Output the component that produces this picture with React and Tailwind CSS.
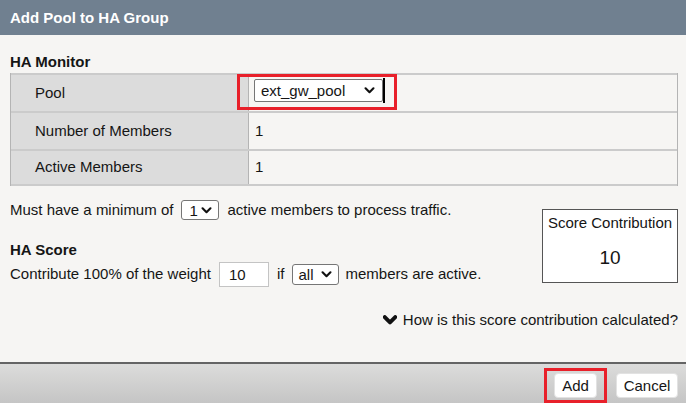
import React from 'react';

const Chevron = ({ className = 'w-[11px] h-[7px]', strokeWidth = 2.4 }) => (
  <svg viewBox="0 0 12 8" className={className} fill="none">
    <path d="M1.5 1.5 L6 6 L10.5 1.5" stroke="#111" strokeWidth={strokeWidth} strokeLinecap="round" strokeLinejoin="round" />
  </svg>
);

const MonitorRow = ({ label, children, last = false, overlay = null }) => (
  <div
    className={`relative flex border-t-2 border-[#cbcbcb] ${last ? 'border-b-2 h-[37px]' : 'h-[38px]'}`}
  >
    <div className="w-[238px] shrink-0 flex items-center pl-[24px] bg-[#dcdcdc] border-r border-[#b4b4b4]">
      {label}
    </div>
    <div className="flex-1 flex items-start pl-[5px]">{children}</div>
    {overlay}
  </div>
);

export default function App() {
  return (
    <div
      className="w-[686px] h-[403px] flex flex-col bg-[#f6f5f3] text-[15px] text-[#151515] overflow-hidden"
      style={{ fontFamily: '"Liberation Sans", Arial, sans-serif' }}
    >
      {/* Title bar */}
      <div className="h-[35px] shrink-0 bg-[#708090] flex items-center px-[10px]">
        <span className="text-white font-bold text-[15px] leading-none">Add Pool to HA Group</span>
      </div>

      <div className="px-[8px] pt-[18px]">
        <div className="font-bold leading-[18px] px-[2px]">HA Monitor</div>

        <div className="mt-[2px] ml-[2px] border-l border-r border-[#b4b4b4]">
          <MonitorRow
            label="Pool"
            overlay={
              <div className="absolute left-[226px] top-[-1px] w-[160px] h-[36px] border-[3px] border-[#e8202a] pointer-events-none" />
            }
          >
            <div className="mt-[3px] flex items-center">
              <div className="w-[129px] h-[23px] bg-white border border-[#767676] rounded-[2px] flex items-center justify-between pl-[6px] pr-[7px]">
                <span className="leading-none">ext_gw_pool</span>
                <Chevron />
              </div>
              <div className="w-[2px] h-[25px] bg-black" />
            </div>
          </MonitorRow>
          <MonitorRow label="Number of Members">
            <div className="h-full flex items-center pl-[1px]">1</div>
          </MonitorRow>
          <MonitorRow label="Active Members" last>
            <div className="h-full flex items-center pl-[1px]">1</div>
          </MonitorRow>
        </div>

        <div className="flex mt-[13px] pl-[2px]">
          <div className="flex-1">
            <div className="flex items-center gap-[8px] h-[22px]">
              <span>Must have a minimum of</span>
              <div className="w-[38px] h-[20px] bg-white border border-[#767676] rounded-[3px] flex items-center justify-between pl-[7px] pr-[6px]">
                <span className="leading-none">1</span>
                <Chevron />
              </div>
              <span>active members to process traffic.</span>
            </div>

            <div className="font-bold leading-[16px] mt-[21px]">HA Score</div>

            <div className="flex items-center gap-[8px] h-[26px] mt-[3px]">
              <span>Contribute 100% of the weight</span>
              <div className="w-[50px] h-[25px] bg-white border border-[#c4c4c4] flex items-center pl-[9px]">
                <span className="leading-none">10</span>
              </div>
              <span>if</span>
              <div className="w-[47px] h-[21px] bg-white border border-[#767676] rounded-[3px] flex items-center justify-between pl-[5px] pr-[6px]">
                <span className="leading-none">all</span>
                <Chevron />
              </div>
              <span className="ml-[-2px]">members are active.</span>
            </div>
          </div>

          <div className="w-[136px] h-[74px] mt-[10px] bg-white border border-[#555] flex flex-col items-center">
            <span className="mt-[4px] leading-[18px]">Score Contribution</span>
            <span className="mt-[16px] text-[19px] leading-[20px]">10</span>
          </div>
        </div>

        <div className="flex justify-end items-center gap-[6px] mt-[25px]">
          <Chevron className="w-[14px] h-[10px]" strokeWidth={3.4} />
          <span className="leading-[16px]">How is this score contribution calculated?</span>
        </div>
      </div>

      {/* Footer */}
      <div className="mt-auto h-[41px] shrink-0 border-t-2 border-[#646464] bg-gradient-to-b from-[#dcdcdb] to-[#c5c5c5] flex justify-end items-start pt-[4px] pr-[8px]">
        <div className="border-[3px] border-[#e8202a] px-[7px] pt-[2px] h-[35px]">
          <button className="w-[43px] h-[25px] bg-white rounded-[4px] border border-[#e2e2e2] text-[15px] leading-none">
            Add
          </button>
        </div>
        <button className="ml-[9px] mt-[5px] w-[62px] h-[25px] bg-white rounded-[4px] border border-[#e2e2e2] text-[15px] leading-none">
          Cancel
        </button>
      </div>
    </div>
  );
}
